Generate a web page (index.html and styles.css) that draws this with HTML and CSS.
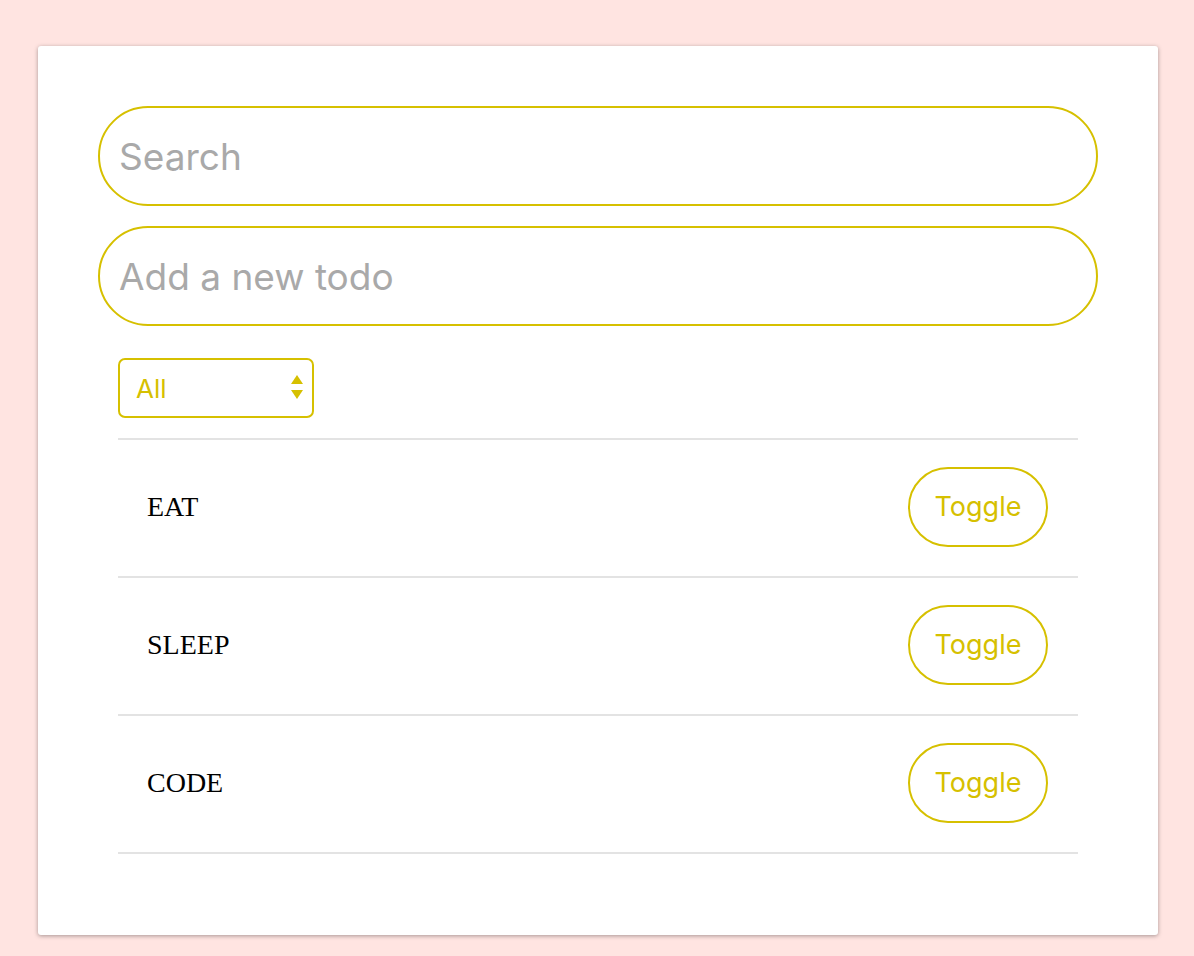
FILE: index.html
```html
<!DOCTYPE html>
<html>
<head>
<meta charset="utf-8">
<link rel="stylesheet" href="styles.css">
</head>
<body>
<div class="card">
  <input class="field" type="text" placeholder="Search">
  <input class="field field-add" type="text" placeholder="Add a new todo">
  <div class="filter">
    <div class="select">
      <span class="select-label">All</span>
      <svg class="select-arrows" width="12" height="26" viewBox="0 0 12 26">
        <polygon points="6,0 12,9 0,9" fill="#d6c000"/>
        <polygon points="0,15 12,15 6,24" fill="#d6c000"/>
      </svg>
    </div>
  </div>
  <ul class="list">
    <li class="item"><span class="item-text">EAT</span><button class="toggle">Toggle</button></li>
    <li class="item"><span class="item-text">SLEEP</span><button class="toggle">Toggle</button></li>
    <li class="item"><span class="item-text">CODE</span><button class="toggle">Toggle</button></li>
  </ul>
</div>
</body>
</html>
```
FILE: styles.css
```css
html, body {
  margin: 0;
  padding: 0;
  background: #ffe4e1;
}
body {
  padding: 46px 36px 22px 38px;
}
.card {
  background: #fff;
  border-radius: 3px;
  box-shadow: 0 1px 4px rgba(0, 0, 0, 0.35);
  padding: 60px 60px 60px 60px;
  display: flex;
  flex-direction: column;
}
.field {
  box-sizing: border-box;
  width: 1000px;
  height: 100px;
  border: 2px solid #d6c000;
  border-radius: 50px;
  padding: 0 19px;
  font-family: Inter, "Liberation Sans", Arial, sans-serif;
  font-size: 37px;
  color: #333;
  outline: none;
  background: #fff;
}
.field::placeholder {
  color: #a9a9a9;
}
.field-add {
  margin-top: 20px;
}
.filter {
  margin: 32px 20px 20px;
}
.select {
  box-sizing: border-box;
  width: 196px;
  height: 60px;
  border: 2px solid #d6c000;
  border-radius: 7px;
  display: flex;
  align-items: center;
  justify-content: space-between;
  padding: 0 9px 0 16px;
}
.select-label {
  font-family: Inter, "Liberation Sans", Arial, sans-serif;
  font-size: 26px;
  color: #d6c000;
}
.select-arrows {
  display: block;
}
.list {
  list-style: none;
  margin: 0 20px 21px;
  padding: 0;
  border-top: 2px solid #e3e3e3;
}
.item {
  display: flex;
  align-items: center;
  justify-content: space-between;
  box-sizing: content-box;
  height: 133px;
  padding: 0 30px 3px 29px;
  border-bottom: 2px solid #e3e3e3;
}
.item-text {
  font-family: "Liberation Serif", "Times New Roman", serif;
  font-size: 28px;
  color: #000;
}
.toggle {
  box-sizing: border-box;
  width: 140px;
  height: 80px;
  border: 2px solid #d6c000;
  border-radius: 40px;
  background: #fff;
  font-family: Inter, "Liberation Sans", Arial, sans-serif;
  font-size: 27px;
  color: #d6c000;
  padding: 0;
  cursor: pointer;
}
```
